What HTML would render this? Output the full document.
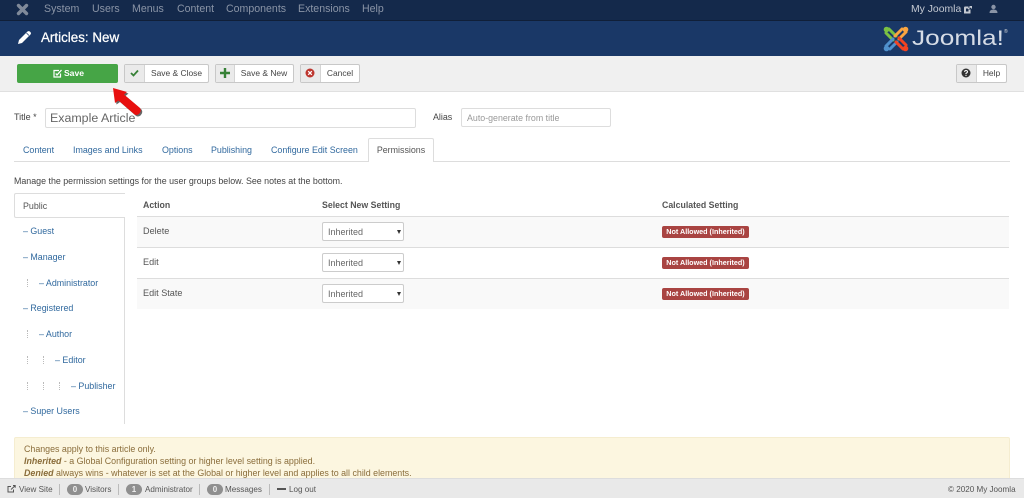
<!DOCTYPE html>
<html><head><meta charset="utf-8">
<style>
html,body{margin:0;padding:0;width:1024px;height:498px;overflow:hidden;background:#fff;font-family:"Liberation Sans",sans-serif;font-size:8.9px;color:#555}
.a{position:absolute;white-space:nowrap}
.nav{color:#8a94a6;font-size:10.6px;top:3px}
.btn{position:absolute;top:64px;height:17px;border:1px solid #c8c8c8;border-radius:2px;background:#fff;color:#444;font-size:8.45px;line-height:17px;text-align:center;box-sizing:content-box}
.btn i{position:absolute;left:0;top:0;height:17px;background:#eaeaea;border-right:1px solid #d4d4d4;font-style:normal}
.tab{position:absolute;top:144px;color:#31699e;font-size:8.9px}
.lnk{position:absolute;color:#31699e;font-size:8.9px;white-space:nowrap}
.dot{position:absolute;width:1px;height:8px;border-left:1px dotted #bbb}
.row{position:absolute;left:137px;width:872px;height:30px;border-bottom:1px solid #ddd}
.sel{position:absolute;left:322px;width:80px;height:17px;border:1px solid #ccc;border-radius:2px;background:#fff;color:#666;font-size:9px;line-height:18px;text-indent:5px}
.sel:after{content:"";position:absolute;right:2px;top:7px;border:2.5px solid transparent;border-top:4px solid #333}
.lab{position:absolute;left:662px;width:87px;height:12px;background:#a94442;border-radius:2px;color:#fff;font-size:7.2px;font-weight:bold;line-height:12px;text-align:center;white-space:nowrap}
.td{position:absolute;left:143px;font-size:9.1px;color:#555}
.th{position:absolute;top:200px;font-size:8.75px;font-weight:bold;color:#555}
.bdg{position:absolute;top:484px;height:11px;width:16px;background:#8f8f8f;border-radius:6px;color:#eee;font-size:8px;font-weight:bold;line-height:11px;text-align:center}
.ft{position:absolute;top:485px;font-size:8.1px;color:#555;white-space:nowrap}
.sep{position:absolute;top:484px;width:1px;height:11px;background:#bbb}
</style></head><body>
<div class="a" style="left:0;top:0;width:1024px;height:21px;background:#14294b;border-bottom:1px solid #101f38;box-sizing:border-box"></div>
<svg class="a" style="left:16px;top:3px" width="13" height="13" viewBox="0 0 13 13"><path d="M2.5 2.5L10.5 10.5M10.5 2.5L2.5 10.5" stroke="#808a9a" stroke-width="3.4" stroke-linecap="round"/></svg>
<span class="a nav" style="left:44px">System</span><span class="a nav" style="left:92px">Users</span><span class="a nav" style="left:132px">Menus</span><span class="a nav" style="left:177px">Content</span><span class="a nav" style="left:226px">Components</span><span class="a nav" style="left:298px">Extensions</span><span class="a nav" style="left:362px">Help</span>
<span class="a" style="left:911px;top:4px;font-size:10.4px;color:#c4c9d2">My Joomla</span>
<svg class="a" style="left:964px;top:6px" width="8" height="8" viewBox="0 0 8 8"><path d="M1 2H4V1H1Q.5 1 .5 2V7H6V4H5V6H1.5V2M4 3L7.5 .5M5.5 .5H7.5V2.5" fill="none" stroke="#c4c9d2" stroke-width="1"/></svg>
<svg class="a" style="left:989px;top:4px" width="9" height="10" viewBox="0 0 9 10"><circle cx="4.5" cy="3" r="2.2" fill="#8a94a6"/><path d="M.5 9Q.5 5.5 4.5 5.5T8.5 9Z" fill="#8a94a6"/></svg>

<div class="a" style="left:0;top:21px;width:1024px;height:35px;background:#1a3867"></div>
<svg class="a" style="left:17px;top:30px" width="15" height="15" viewBox="0 0 15 15"><path d="M1 14L2 10L10.5 1.5Q11.5 .7 12.7 1.4L13.7 2.4Q14.4 3.5 13.5 4.5L5 13Z" fill="#fff"/><path d="M9.5 3L12 5.500" stroke="#1a3867" stroke-width=".8"/></svg>
<span class="a" style="left:41px;top:30px;font-size:13.4px;color:#fff;-webkit-text-stroke:.25px #fff">Articles: New</span>
<svg class="a" style="left:882px;top:25px" width="28" height="28" viewBox="0 0 28 28" fill="none" stroke-linecap="round" stroke-width="3">
<g stroke="#7ac143" fill="#7ac143"><path d="M7 4L14 11M4 8L11 15" fill="none"/><circle cx="4.500" cy="4.500" r="2.800" stroke="none"/></g>
<g stroke="#f9a541" fill="#f9a541"><path d="M24 7L17 14M20 4L13 11" fill="none"/><circle cx="23.500" cy="4.500" r="2.800" stroke="none"/></g>
<g stroke="#5091cd" fill="#5091cd"><path d="M4 21L11 14M8 24L15 17" fill="none"/><circle cx="4.500" cy="23.500" r="2.800" stroke="none"/></g>
<g stroke="#f44321" fill="#f44321"><path d="M21 24L14 17M24 20L17 13" fill="none"/><circle cx="23.500" cy="23.500" r="2.800" stroke="none"/></g></svg>
<span class="a" style="left:912px;top:27px;font-size:21px;color:#d6dce6;transform:scaleX(1.25);transform-origin:0 0">Joomla!</span>
<span class="a" style="left:1004px;top:29px;font-size:5px;color:#ddd">®</span>

<div class="a" style="left:0;top:56px;width:1024px;height:36px;background:#f0f0f0;border-bottom:1px solid #e0e0e0;box-sizing:border-box"></div>
<div class="a" style="left:17px;top:64px;width:101px;height:19px;background:#46a546;border-radius:2px;color:#fff;font-size:8.6px;font-weight:bold;line-height:19px;text-align:center;text-indent:13px;box-sizing:border-box">Save</div>
<svg class="a" style="left:53px;top:69px" width="9" height="9" viewBox="0 0 9 9"><path d="M6 1.500H1V8H7.500V4.500" fill="none" stroke="#fff" stroke-width="1.200"/><path d="M2.800 4.500L4 6L8.500 1" fill="none" stroke="#fff" stroke-width="1.300"/></svg>

<div class="btn" style="left:124px;width:83px;text-indent:20px"><i style="width:19px"></i>Save &amp; Close</div>
<svg class="a" style="left:130px;top:69px" width="9" height="8" viewBox="0 0 9 8"><path d="M1 4L3.500 6.500L8 1.500" fill="none" stroke="#378137" stroke-width="1.800"/></svg>
<div class="btn" style="left:215px;width:77px;text-indent:19px"><i style="width:18px"></i>Save &amp; New</div>
<svg class="a" style="left:220px;top:68px" width="10" height="10" viewBox="0 0 10 10"><path d="M5 0V10M0 5H10" stroke="#378137" stroke-width="2.400"/></svg>
<div class="btn" style="left:300px;width:58px;text-indent:20px"><i style="width:19px"></i>Cancel</div>
<svg class="a" style="left:305px;top:68px" width="10" height="10" viewBox="0 0 10 10"><circle cx="5" cy="5" r="4.500" fill="#bd362f"/><path d="M3.200 3.200L6.800 6.800M6.800 3.200L3.200 6.800" stroke="#fff" stroke-width="1.300"/></svg>
<div class="btn" style="left:956px;width:49px;text-indent:20px"><i style="width:19px"></i>Help</div>
<svg class="a" style="left:961px;top:68px" width="10" height="10" viewBox="0 0 10 10"><circle cx="5" cy="5" r="4.500" fill="#333"/><path d="M3.500 3.800Q3.700 2.500 5 2.500T6.500 3.700Q6.500 4.500 5 5.300V6" fill="none" stroke="#fff" stroke-width="1.100"/><path d="M5 6.800V8" stroke="#fff" stroke-width="1.100"/></svg>

<span class="a" style="left:14px;top:112px;font-size:9px;color:#444">Title *</span>
<div class="a" style="left:45px;top:108px;width:371px;height:20px;border:1px solid #ddd;border-radius:2px;box-sizing:border-box;font-size:12.4px;line-height:19px;color:#666;padding-left:4px">Example Article</div>
<span class="a" style="left:433px;top:112px;font-size:8.9px;color:#444">Alias</span>
<div class="a" style="left:461px;top:108px;width:150px;height:19px;border:1px solid #ddd;border-radius:2px;box-sizing:border-box;font-size:8.85px;line-height:18px;color:#999;padding-left:5px">Auto-generate from title</div>

<div class="a" style="left:14px;top:161px;width:996px;height:1px;background:#ddd"></div>
<span class="tab" style="left:23px;top:145px">Content</span><span class="tab" style="left:73px;top:145px">Images and Links</span><span class="tab" style="left:162px;top:145px">Options</span><span class="tab" style="left:211px;top:145px">Publishing</span><span class="tab" style="left:271px;top:145px">Configure Edit Screen</span>
<div class="a" style="left:368px;top:138px;width:66px;height:24px;background:#fff;border:1px solid #ddd;border-bottom:0;border-radius:2px 2px 0 0;box-sizing:border-box;font-size:8.9px;line-height:23px;text-align:center;color:#555">Permissions</div>

<span class="a" style="left:14px;top:176px;font-size:8.87px;color:#444">Manage the permission settings for the user groups below. See notes at the bottom.</span>

<div class="a" style="left:124px;top:217px;width:1px;height:207px;background:#ddd"></div>
<div class="a" style="left:14px;top:193px;width:111px;height:25px;background:#fff;border:1px solid #ddd;border-right:0;border-radius:2px 0 0 2px;box-sizing:border-box;font-size:8.9px;line-height:24px;color:#555;padding-left:8px">Public</div>
<span class="lnk" style="left:23px;top:226px">– Guest</span>
<span class="lnk" style="left:23px;top:252px">– Manager</span>
<i class="dot" style="left:27px;top:279px"></i><span class="lnk" style="left:39px;top:278px">– Administrator</span>
<span class="lnk" style="left:23px;top:303px">– Registered</span>
<i class="dot" style="left:27px;top:330px"></i><span class="lnk" style="left:39px;top:329px">– Author</span>
<i class="dot" style="left:27px;top:356px"></i><i class="dot" style="left:43px;top:356px"></i><span class="lnk" style="left:55px;top:355px">– Editor</span>
<i class="dot" style="left:27px;top:382px"></i><i class="dot" style="left:43px;top:382px"></i><i class="dot" style="left:59px;top:382px"></i><span class="lnk" style="left:71px;top:381px">– Publisher</span>
<span class="lnk" style="left:23px;top:406px">– Super Users</span>

<span class="th" style="left:143px">Action</span><span class="th" style="left:322px">Select New Setting</span><span class="th" style="left:662px">Calculated Setting</span>
<div class="a" style="left:137px;top:216px;width:872px;height:1px;background:#ddd"></div>
<div class="row" style="top:217px;background:#f9f9f9"></div>
<div class="row" style="top:248px;background:#fff"></div>
<div class="row" style="top:279px;background:#f9f9f9;border-bottom:0"></div>
<span class="td" style="top:226px">Delete</span><span class="td" style="top:257px">Edit</span><span class="td" style="top:288px">Edit State</span>
<div class="sel" style="top:222px">Inherited</div><div class="sel" style="top:253px">Inherited</div><div class="sel" style="top:284px">Inherited</div>
<div class="lab" style="top:226px">Not Allowed (Inherited)</div><div class="lab" style="top:257px">Not Allowed (Inherited)</div><div class="lab" style="top:288px">Not Allowed (Inherited)</div>

<div class="a" style="left:14px;top:437px;width:996px;height:45px;background:#fcf6e0;border:1px solid #f5edd0;border-radius:2px;box-sizing:border-box"></div>
<div class="a" style="left:24px;top:443px;font-size:8.87px;line-height:12px;color:#8a6d3b">Changes apply to this article only.<br><b><i>Inherited</i></b> - a Global Configuration setting or higher level setting is applied.<br><b><i>Denied</i></b> always wins - whatever is set at the Global or higher level and applies to all child elements.</div>

<div class="a" style="left:0;top:478px;width:1024px;height:20px;background:#e9e9e9;border-top:1px solid #ddd;box-sizing:border-box"></div>
<svg class="a" style="left:7px;top:485px" width="9" height="8" viewBox="0 0 9 8"><path d="M4 1.500H1V7H6.500V4.500M4 4.500L8 .8M6 .5H8.200V2.700" fill="none" stroke="#555" stroke-width="1"/></svg>
<span class="ft" style="left:19px">View Site</span><i class="sep" style="left:59px"></i>
<div class="bdg" style="left:67px">0</div><span class="ft" style="left:85px">Visitors</span><i class="sep" style="left:118px"></i>
<div class="bdg" style="left:126px">1</div><span class="ft" style="left:145px">Administrator</span><i class="sep" style="left:199px"></i>
<div class="bdg" style="left:207px">0</div><span class="ft" style="left:225px">Messages</span><i class="sep" style="left:269px"></i>
<div class="a" style="left:277px;top:488px;width:9px;height:2px;background:#555"></div><span class="ft" style="left:289px">Log out</span>
<span class="ft" style="left:948px">© 2020 My Joomla</span>

<svg class="a" style="left:105px;top:80px" width="45" height="45" viewBox="0 0 45 45">
<path d="M8 8L22 12L19 14.500L35 28Q37 31 34 34Q31 36 29 34L13.500 20.500L10 23Z" fill="#000" opacity=".6" transform="translate(1.500 1.500)"/>
<path d="M8 8L22 12L19 14.500L35 28Q37 31 34 34Q31 36 29 34L13.500 20.500L10 23Z" fill="#e8100f"/></svg>
</body></html>
